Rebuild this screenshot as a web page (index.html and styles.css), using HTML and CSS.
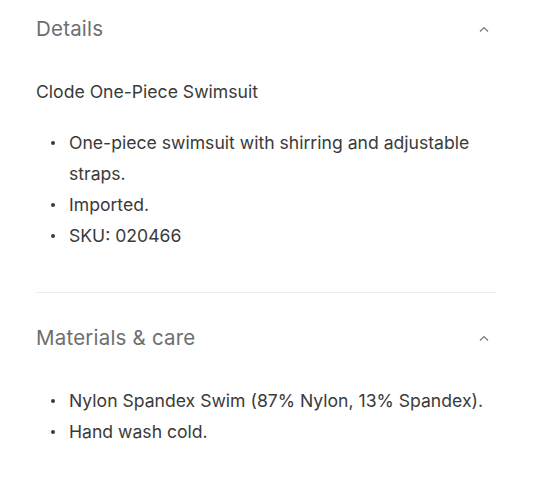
FILE: index.html
```html
<!DOCTYPE html>
<html lang="en">
<head>
<meta charset="utf-8">
<link rel="stylesheet" href="styles.css">
</head>
<body>
<div class="accordion">
  <section class="panel">
    <div class="panel-head">
      <h2 class="panel-title">Details</h2>
      <svg class="chev" width="10" height="6" viewBox="0 0 10 6"><path d="M1 5.5 L5 1.5 L9 5.5" fill="none" stroke="#777" stroke-width="1.2"/></svg>
    </div>
    <div class="panel-body">
      <p class="lead">Clode One-Piece Swimsuit</p>
      <ul class="bullets">
        <li>One-piece swimsuit with shirring and adjustable straps.</li>
        <li>Imported.</li>
        <li>SKU: 020466</li>
      </ul>
    </div>
  </section>
  <section class="panel panel-next">
    <div class="panel-head">
      <h2 class="panel-title">Materials &amp; care</h2>
      <svg class="chev" width="10" height="6" viewBox="0 0 10 6"><path d="M1 5.5 L5 1.5 L9 5.5" fill="none" stroke="#777" stroke-width="1.2"/></svg>
    </div>
    <div class="panel-body">
      <ul class="bullets">
        <li>Nylon Spandex Swim (87% Nylon, 13% Spandex).</li>
        <li>Hand wash cold.</li>
      </ul>
    </div>
  </section>
</div>
</body>
</html>
```
FILE: styles.css
```css
html, body {
  margin: 0;
  padding: 0;
  background: #fff;
}
body {
  font-family: Inter, "Noto Sans", sans-serif;
  color: #3a3a3a;
}
.accordion {
  width: 460px;
  margin-left: 36px;
}
.panel {
  padding-bottom: 41px;
}
.panel-next {
  border-top: 1px solid #ececec;
  padding-top: 16px;
}
.panel-head {
  height: 57px;
  display: flex;
  align-items: center;
  justify-content: space-between;
}
.panel-title {
  margin: 0;
  font-size: 20.5px;
  font-weight: 400;
  color: #6e6e6e;
  letter-spacing: 0.2px;
}
.chev {
  margin-right: 7px;
}
.panel-body {
  padding-top: 19px;
  font-size: 17.6px;
  line-height: 31px;
}
.lead {
  margin: 0 0 20px;
}
.bullets {
  margin: 0;
  padding-left: 33px;
  list-style: none;
}
.bullets li {
  position: relative;
}
.bullets li::before {
  content: "";
  position: absolute;
  left: -18px;
  top: 14px;
  width: 4px;
  height: 4px;
  border-radius: 50%;
  background: #3a3a3a;
}
```
